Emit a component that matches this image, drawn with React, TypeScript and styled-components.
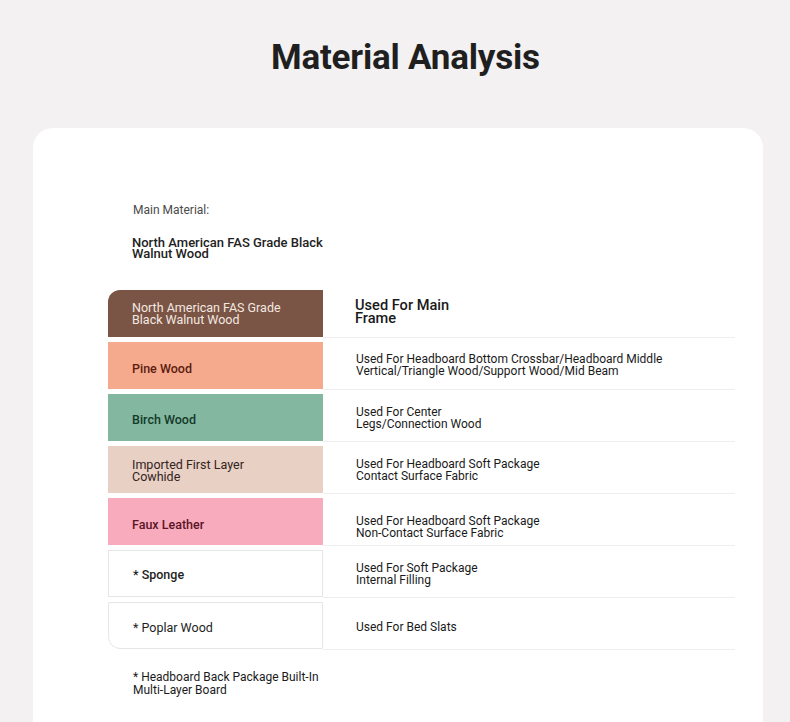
import React from "react";
import styled, { createGlobalStyle } from "styled-components";

const GlobalStyle = createGlobalStyle`
  html, body {
    margin: 0;
    padding: 0;
    background: #f3f1f1;
    font-family: Roboto, "Liberation Sans", Arial, sans-serif;
    color: #222;
  }
`;

const Page = styled.div`
  width: 790px;
  min-height: 722px;
  box-sizing: border-box;
  padding-left: 33px;
  display: flex;
  flex-direction: column;
  align-items: flex-start;
  overflow: hidden;
`;

const Title = styled.h1`
  margin: 36px 0 0 238px;
  height: 44px;
  font-size: 35px;
  line-height: 44px;
  font-weight: 700;
  color: #1f1f1f;
  letter-spacing: -0.2px;
  white-space: nowrap;
`;

const Card = styled.section`
  margin-top: 48px;
  width: 730px;
  box-sizing: border-box;
  background: #ffffff;
  border-radius: 20px;
  padding: 75px 28px 60px 75px;
  display: flex;
  flex-direction: column;
`;

const MainLabel = styled.div`
  padding-left: 25px;
  font-size: 12px;
  line-height: 14px;
  color: #4a4a4a;
`;

const MainValue = styled.div`
  margin-top: 20px;
  padding-left: 24px;
  width: 210px;
  font-size: 13px;
  line-height: 11px;
  font-weight: 500;
  color: #222;
`;

const Table = styled.div`
  margin-top: 31px;
  display: grid;
  grid-template-columns: 215px 1fr;
  row-gap: 5px;
`;

type Tone = {
  bg: string;
  fg: string;
  weight: number;
  border?: boolean;
  radius?: string;
};

const MaterialCell = styled.div<{ $tone: Tone }>`
  height: 47px;
  box-sizing: border-box;
  display: flex;
  align-items: center;
  padding: 2px 30px 0 24px;
  background: ${(p) => p.$tone.bg};
  color: ${(p) => p.$tone.fg};
  border: ${(p) => (p.$tone.border ? "1px solid #e6e6e6" : "none")};
  border-radius: ${(p) => p.$tone.radius ?? "0"};
  font-size: 12.5px;
  line-height: 12px;
  font-weight: ${(p) => p.$tone.weight};
`;

const MaterialName = styled.span<{ $shift: number }>`
  display: block;
  margin-top: ${(p) => p.$shift}px;
`;

const UseCell = styled.div<{ $big?: boolean }>`
  height: 48px;
  margin-bottom: -5px;
  box-sizing: border-box;
  display: flex;
  align-items: center;
  padding: 1px 20px 0 ${(p) => (p.$big ? 32 : 33)}px;
  border-bottom: 1px solid #eeeeee;
  font-size: ${(p) => (p.$big ? "14.6px" : "12px")};
  line-height: ${(p) => (p.$big ? "13px" : "12px")};
  font-weight: ${(p) => (p.$big ? 500 : 400)};
  color: #1a1a1a;
`;

const UseText = styled.span<{ $w: number; $shift: number }>`
  display: block;
  width: ${(p) => p.$w}px;
  margin-top: ${(p) => p.$shift}px;
`;

const Footnote = styled.div`
  margin-top: 22px;
  padding-left: 25px;
  width: 200px;
  font-size: 12px;
  line-height: 13px;
  font-weight: 400;
  color: #1a1a1a;
`;

type Row = {
  name: string;
  nameShift: number;
  use: string;
  useWidth: number;
  tone: Tone;
  big?: boolean;
  shift: number;
};

const rows: Row[] = [
  {
    name: "North American FAS Grade Black Walnut Wood",
    nameShift: -2,
    use: "Used For Main Frame",
    useWidth: 110,
    big: true,
    shift: -4,
    tone: { bg: "#7a5444", fg: "#f3e8e2", weight: 400, radius: "12px 0 0 0" },
  },
  {
    name: "Pine Wood",
    nameShift: 4,
    use: "Used For Headboard Bottom Crossbar/Headboard Middle Vertical/Triangle Wood/Support Wood/Mid Beam",
    useWidth: 320,
    shift: -2,
    tone: { bg: "#f5a98d", fg: "#5a1d10", weight: 500 },
  },
  {
    name: "Birch Wood",
    nameShift: 2,
    use: "Used For Center Legs/Connection Wood",
    useWidth: 130,
    shift: -1,
    tone: { bg: "#83b7a0", fg: "#133a2a", weight: 500 },
  },
  {
    name: "Imported First Layer Cowhide",
    nameShift: 0,
    use: "Used For Headboard Soft Package Contact Surface Fabric",
    useWidth: 190,
    shift: -1,
    tone: { bg: "#e8d0c4", fg: "#33231d", weight: 400 },
  },
  {
    name: "Faux Leather",
    nameShift: 4,
    use: "Used For Headboard Soft Package Non-Contact Surface Fabric",
    useWidth: 190,
    shift: 10,
    tone: { bg: "#f8abbd", fg: "#5a1626", weight: 500 },
  },
  {
    name: "* Sponge",
    nameShift: 0,
    use: "Used For Soft Package Internal Filling",
    useWidth: 130,
    shift: -1,
    tone: { bg: "#ffffff", fg: "#1e1e1e", weight: 500, border: true },
  },
  {
    name: "* Poplar Wood",
    nameShift: 2,
    use: "Used For Bed Slats",
    useWidth: 200,
    shift: 2,
    tone: { bg: "#ffffff", fg: "#1e1e1e", weight: 400, border: true, radius: "0 0 0 12px" },
  },
];

export default function App() {
  return (
    <>
      <GlobalStyle />
      <Page>
        <Title>Material Analysis</Title>
        <Card>
          <MainLabel>Main Material:</MainLabel>
          <MainValue>North American FAS Grade Black Walnut Wood</MainValue>
          <Table>
            {rows.map((r) => (
              <React.Fragment key={r.name}>
                <MaterialCell $tone={r.tone}>
                  <MaterialName $shift={r.nameShift}>{r.name}</MaterialName>
                </MaterialCell>
                <UseCell $big={r.big}>
                  <UseText $w={r.useWidth} $shift={r.shift}>
                    {r.use}
                  </UseText>
                </UseCell>
              </React.Fragment>
            ))}
          </Table>
          <Footnote>* Headboard Back Package Built-In Multi-Layer Board</Footnote>
        </Card>
      </Page>
    </>
  );
}
